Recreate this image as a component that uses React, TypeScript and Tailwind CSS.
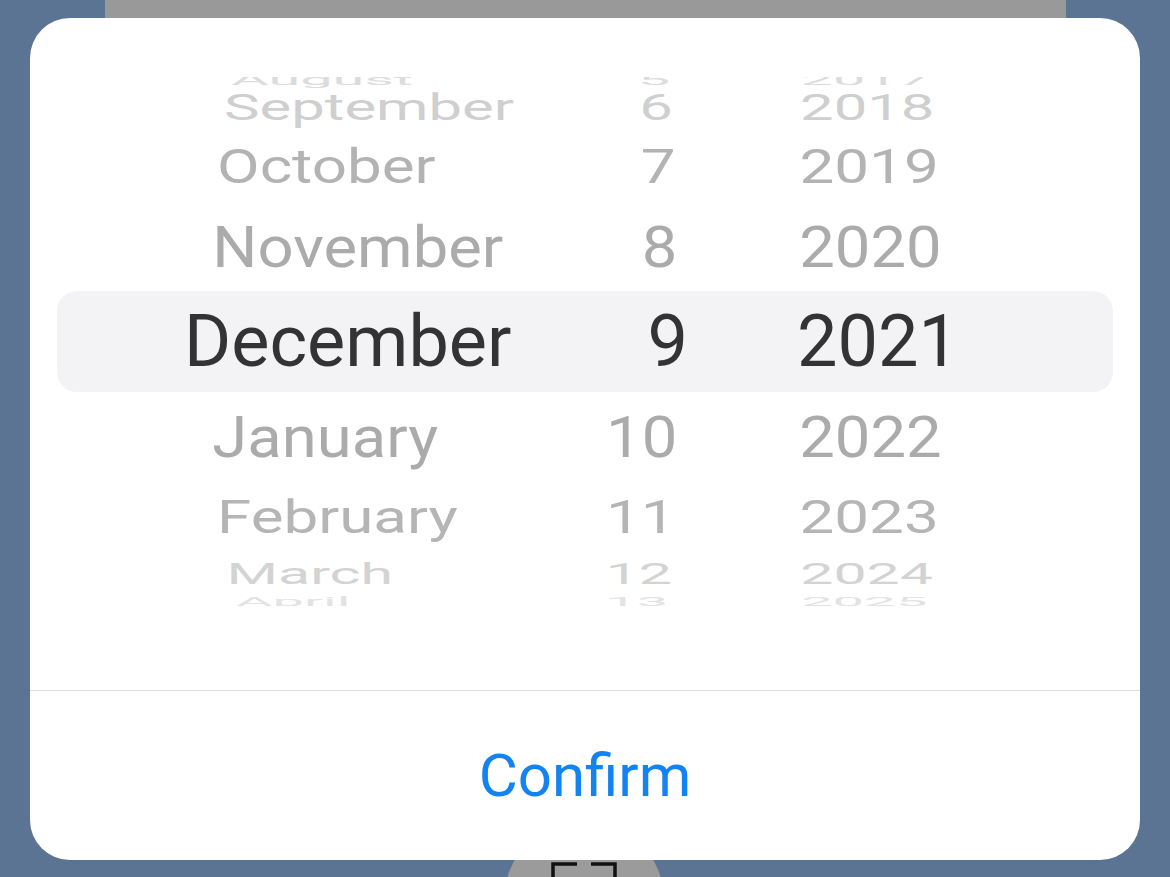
import React from 'react';

type Row = {
  month: string;
  day: string;
  year: string;
  h: number;
  dy: number;
  sx: number;
  sy: number;
  color: string;
  selected?: boolean;
};

const rows: Row[] = [
  { month: 'August', day: '5', year: '2017', h: 28, dy: 2, sx: 0.8, sy: 0.2, color: '#dcdcdc' },
  { month: 'September', day: '6', year: '2018', h: 44, dy: -6, sx: 0.83, sy: 0.5, color: '#cfcfcf' },
  { month: 'October', day: '7', year: '2019', h: 71, dy: -5.5, sx: 0.86, sy: 0.68, color: '#b3b3b3' },
  { month: 'November', day: '8', year: '2020', h: 84, dy: -1, sx: 0.88, sy: 0.81, color: '#ababab' },
  { month: 'December', day: '9', year: '2021', h: 101, dy: 0, sx: 1, sy: 1, color: '#333333', selected: true },
  { month: 'January', day: '10', year: '2022', h: 85, dy: 2.5, sx: 0.88, sy: 0.81, color: '#ababab' },
  { month: 'February', day: '11', year: '2023', h: 68, dy: 6, sx: 0.86, sy: 0.65, color: '#b5b5b5' },
  { month: 'March', day: '12', year: '2024', h: 42, dy: 8, sx: 0.82, sy: 0.42, color: '#d3d3d3' },
  { month: 'April', day: '13', year: '2025', h: 26, dy: 2, sx: 0.78, sy: 0.18, color: '#e3e3e3' },
];

function PickerRow({ row }: { row: Row }) {
  const cell = {
    transform: `translateY(${row.dy}px) scale(${row.sx}, ${row.sy})`,
    color: row.color,
  };
  return (
    <div
      className={`mx-[27px] flex items-center shrink-0 ${row.selected ? 'bg-[#f3f3f5] rounded-[20px]' : ''}`}
      style={{ height: row.h }}
    >
      <div className="ml-[127px] w-[413px] text-left origin-[236px_50%]" style={cell}>
        {row.month}
      </div>
      <div className="w-[91px] text-right origin-[2px_50%]" style={cell}>
        {row.day}
      </div>
      <div className="ml-[109px] w-[200px] text-left origin-[18px_50%]" style={cell}>
        {row.year}
      </div>
    </div>
  );
}

export default function App() {
  return (
    <div className="relative h-[877px] w-[1170px] overflow-hidden bg-[#5b7493] font-['Roboto',sans-serif]">
      {/* page behind the sheet */}
      <div className="flex h-full flex-col">
        <div className="ml-[105px] h-[60px] w-[961px] bg-[#999999]"></div>
        <div className="flex-1"></div>
        <div className="ml-[504px] mb-[-103px] h-[160px] w-[160px] rounded-full bg-[#9b9b9b] flex justify-center pt-[42px]">
          <svg width="66" height="66" viewBox="0 0 66 66" fill="none" stroke="#111" strokeWidth="3.5">
            <path d="M2 24V2h24" />
            <path d="M40 2h24v22" />
            <path d="M2 42v22h24" />
            <path d="M40 64h24V42" />
          </svg>
        </div>
      </div>

      {/* date picker sheet */}
      <div className="absolute left-[30px] top-[18px] flex h-[842px] w-[1110px] flex-col overflow-hidden rounded-[40px] bg-white">
        <div className="h-[672px] shrink-0 pt-[59px]">
          <div className="h-[529px] overflow-hidden">
            <div className="-mt-[13px] flex flex-col text-[72px] leading-none">
              {rows.map((row) => (
                <PickerRow key={row.month} row={row} />
              ))}
            </div>
          </div>
        </div>
        <div className="h-px bg-[#dedede]"></div>
        <button className="flex flex-1 items-center justify-center text-[60px] leading-none text-[#1283f0]">
          Confirm
        </button>
      </div>
    </div>
  );
}
